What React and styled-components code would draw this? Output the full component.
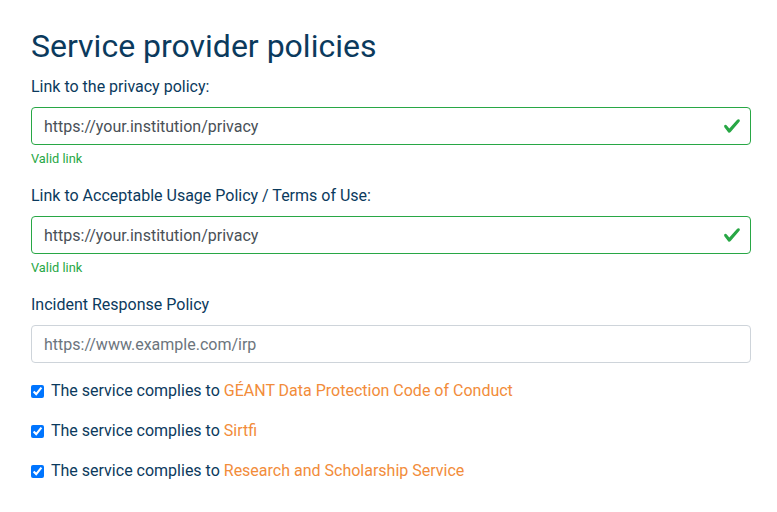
import styled, { createGlobalStyle } from "styled-components";

const GlobalStyle = createGlobalStyle`
  body {
    margin: 0;
    background: #fff;
    font-family: Roboto, "Liberation Sans", sans-serif;
    color: #0b3a5d;
  }
  * { box-sizing: border-box; }
`;

const checkIcon =
  "url(\"data:image/svg+xml,%3csvg xmlns='http://www.w3.org/2000/svg' width='8' height='8' viewBox='0 0 8 8'%3e%3cpath fill='%2328a745' d='M2.3 6.73L.6 4.53c-.4-1.04.46-1.4 1.1-.8l1.1 1.4 3.4-3.8c.6-.63 1.6-.27 1.2.7l-4 4.6c-.43.5-.8.4-1.1.1z'/%3e%3c/svg%3e\")";

const Page = styled.div`
  padding: 27px 26px 20px 31px;
`;

const Title = styled.h2`
  margin: 0 0 10px;
  font-size: 32px;
  font-weight: 400;
  line-height: 1.2;
  color: #0b3a5d;
`;

const Group = styled.div`
  margin-bottom: 16px;
`;

const Label = styled.label`
  display: block;
  margin-bottom: 8px;
  font-size: 16px;
  line-height: 24px;
`;

const Input = styled.input`
  display: block;
  width: 100%;
  height: 38px;
  padding: 6px 12px;
  font-family: inherit;
  font-size: 16px;
  line-height: 1.5;
  color: #495057;
  background-color: #fff;
  border: 1px solid ${(p) => (p.$valid ? "#28a745" : "#ced4da")};
  border-radius: 4px;
  outline: none;
  ${(p) =>
    p.$valid &&
    `
    padding-right: 36px;
    background-image: ${checkIcon};
    background-repeat: no-repeat;
    background-position: right 9px center;
    background-size: 18px 18px;
  `}
  &::placeholder {
    color: #6c757d;
  }
`;

const Feedback = styled.div`
  margin-top: 4px;
  font-size: 12.8px;
  line-height: 19px;
  color: #28a745;
`;

const Check = styled.label`
  display: flex;
  align-items: center;
  margin-bottom: 16px;
  font-size: 16px;
  line-height: 24px;
`;

const Box = styled.input`
  width: 13px;
  height: 13px;
  margin: 0 7px 0 0;
  accent-color: #0075ff;
`;

const Link = styled.a`
  color: #f28c3a;
  text-decoration: none;
`;

const policies = [
  "GÉANT Data Protection Code of Conduct",
  "Sirtfi",
  "Research and Scholarship Service",
];

export default function App() {
  return (
    <Page>
      <GlobalStyle />
      <Title>Service provider policies</Title>
      <Group>
        <Label>Link to the privacy policy:</Label>
        <Input $valid defaultValue="https://your.institution/privacy" />
        <Feedback>Valid link</Feedback>
      </Group>
      <Group>
        <Label>Link to Acceptable Usage Policy / Terms of Use:</Label>
        <Input $valid defaultValue="https://your.institution/privacy" />
        <Feedback>Valid link</Feedback>
      </Group>
      <Group>
        <Label>Incident Response Policy</Label>
        <Input placeholder="https://www.example.com/irp" />
      </Group>
      {policies.map((name) => (
        <Check key={name}>
          <Box type="checkbox" defaultChecked />
          The service complies to&nbsp;<Link href="#">{name}</Link>
        </Check>
      ))}
    </Page>
  );
}
